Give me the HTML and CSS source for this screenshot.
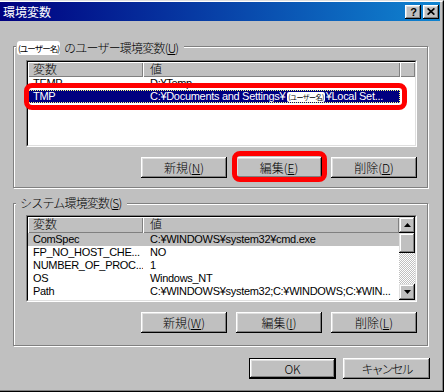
FILE: index.html
```html
<!DOCTYPE html>
<html lang="ja">
<head>
<meta charset="utf-8">
<title>環境変数</title>
<link rel="stylesheet" href="styles.css">
</head>
<body>
<div class="window">
  <div class="frame">
    <div class="titlebar">
      <span class="title">環境変数</span>
      <div class="caps">
        <span class="cap help">?</span>
        <span class="cap close"><svg width="8" height="7" viewBox="0 0 8 7"><path d="M0.6 0.4 L7.4 6.6 M7.4 0.4 L0.6 6.6" stroke="#000" stroke-width="1.7" fill="none"/></svg></span>
      </div>
    </div>
    <div class="content">
      <section class="group g1">
        <div class="legend"><span class="badge">(ユーザー名)</span><span class="ltext">のユーザー環境変数(<u>U</u>)</span></div>
        <div class="list l1">
          <div class="lv">
            <div class="lv-head"><div class="hc c1">変数</div><div class="hc c2">値</div><div class="hc fill"></div></div>
            <div class="lv-body">
              <div class="row first"><span class="cell c1">TEMP</span><span class="cell c2">D:¥Temp</span></div>
              <div class="row sel"><span class="cell c1">TMP</span><span class="cell c2">C:¥Documents and Settings¥<span class="badge-sm">(ユーザー名)</span>¥Local Set...</span></div>
            </div>
          </div>
        </div>
        <div class="btns">
          <button class="btn">新規(<u>N</u>)</button>
          <button class="btn">編集(<u>E</u>)</button>
          <button class="btn">削除(<u>D</u>)</button>
        </div>
      </section>
      <section class="group g2">
        <div class="legend"><span class="ltext">システム環境変数(<u>S</u>)</span></div>
        <div class="list l2">
          <div class="lv">
            <div class="lv-main">
              <div class="lv-head"><div class="hc c1">変数</div><div class="hc c2">値</div></div>
              <div class="lv-body">
                <div class="row hl"><span class="cell c1">ComSpec</span><span class="cell c2">C:¥WINDOWS¥system32¥cmd.exe</span></div>
                <div class="row"><span class="cell c1">FP_NO_HOST_CHE...</span><span class="cell c2">NO</span></div>
                <div class="row"><span class="cell c1">NUMBER_OF_PROC...</span><span class="cell c2">1</span></div>
                <div class="row"><span class="cell c1">OS</span><span class="cell c2">Windows_NT</span></div>
                <div class="row"><span class="cell c1">Path</span><span class="cell c2">C:¥WINDOWS¥system32;C:¥WINDOWS;C:¥WIN...</span></div>
                <div class="row"><span class="cell c1">PATHEXT</span><span class="cell c2">.COM;.EXE;.BAT;.CMD;.VBS;.VBE;.JS;.JSE;.WSF</span></div>
              </div>
            </div>
            <div class="scrollbar">
              <div class="sb-btn"><svg width="7" height="4" viewBox="0 0 7 4"><path d="M3.5 0 L7 4 L0 4 Z" fill="#000"/></svg></div>
              <div class="sb-thumb"></div>
              <div class="sb-track"></div>
              <div class="sb-btn"><svg width="7" height="4" viewBox="0 0 7 4"><path d="M0 0 L7 0 L3.5 4 Z" fill="#000"/></svg></div>
            </div>
          </div>
        </div>
        <div class="btns">
          <button class="btn">新規(<u>W</u>)</button>
          <button class="btn">編集(<u>I</u>)</button>
          <button class="btn">削除(<u>L</u>)</button>
        </div>
      </section>
      <div class="dlg-btns">
        <button class="btn wide default">OK</button>
        <button class="btn wide cancel">キャンセル</button>
      </div>
    </div>
  </div>
  <div class="mark mark-row"></div>
  <div class="mark mark-btn"></div>
</div>
</body>
</html>
```

FILE: styles.css
```css
* { box-sizing: border-box; }

body {
  margin: 0;
  background: #c0c0c0;
  font-family: "Noto Sans CJK JP", sans-serif;
  font-weight: 300;
  font-size: 12px;
  color: #000;
}

.window {
  position: relative;
  width: 444px;
  height: 392px;
  overflow: hidden;
  border-top: 1px solid #dfdfdf;
  border-right: 1px solid #000;
  border-bottom: 1px solid #000;
}

.frame {
  height: 100%;
  border-top: 1px solid #fff;
  border-right: 1px solid #808080;
  border-bottom: 1px solid #808080;
  padding-right: 2px;
  display: flex;
  flex-direction: column;
}

/* title bar */
.titlebar {
  height: 19px;
  flex-shrink: 0;
  display: flex;
  align-items: center;
  padding: 0 1px 0 3px;
  background: linear-gradient(to right, #000080, #1084d0);
}
.title {
  color: #fff;
  font-size: 12px;
  font-weight: 400;
  line-height: 19px;
}
.caps {
  margin-left: auto;
  display: flex;
  gap: 2px;
}
.cap {
  width: 16px;
  height: 14px;
  background: #c0c0c0;
  box-shadow: inset -1px -1px #000, inset 1px 1px #fff, inset -2px -2px #808080, inset 2px 2px #dfdfdf;
  display: flex;
  align-items: center;
  justify-content: center;
}
.help {
  font: bold 11px/14px "Liberation Sans", sans-serif;
  padding-left: 1px;
}

/* content */
.content {
  padding: 25px 10px 0 13px;
  display: flex;
  flex-direction: column;
}

.group {
  width: 415px;
  border: 1px solid #808080;
  box-shadow: inset 1px 1px #fff, 1px 1px #fff;
  display: flex;
  flex-direction: column;
  padding: 0 10px 0 12px;
}
.g1 { padding-bottom: 9px; }
.g2 { margin-top: 15px; padding-bottom: 12px; }

.legend {
  align-self: flex-start;
  height: 14px;
  margin-left: -10px;
  background: #c0c0c0;
  display: flex;
  align-items: center;
  padding: 0 6px 0 1px;
}
.g1 .legend { margin-top: -6px; }
.g2 .legend { margin-top: -8px; padding-left: 4px; }

.ltext {
  letter-spacing: -0.8px;
  line-height: 14px;
  white-space: nowrap;
}

.badge {
  display: inline-block;
  height: 14px;
  line-height: 14px;
  padding: 0 1px;
  margin-right: 4px;
  background: #fff;
  border-radius: 3px;
  font-size: 8.5px;
  font-weight: 400;
  letter-spacing: -1px;
  white-space: nowrap;
}

/* list views */
.list {
  width: 391px;
  height: 87px;
  flex-shrink: 0;
  margin-top: 5px;
  border: 1px solid;
  border-color: #808080 #fff #fff #808080;
}
.lv {
  height: 100%;
  border: 1px solid;
  border-color: #000 #dfdfdf #dfdfdf #000;
  background: #fff;
  display: flex;
  flex-direction: column;
  overflow: hidden;
}
.l2 .lv { flex-direction: row; }
.lv-main {
  flex: 1;
  display: flex;
  flex-direction: column;
  min-width: 0;
}

.lv-head {
  display: flex;
  height: 15px;
  flex-shrink: 0;
}
.l2 .lv-head { height: 16px; }

.hc {
  background: #c0c0c0;
  box-shadow: inset 1px 1px #fff, inset -1px -1px #808080;
  font-size: 12px;
  line-height: 14px;
  white-space: nowrap;
}
.hc.c1 { width: 115px; padding-left: 5px; }
.hc.c2 { width: 257px; padding-left: 7px; }
.l2 .hc.c2 { width: auto; flex: 1; }
.hc.fill { flex: 1; }

.lv-body {
  flex: 1;
  overflow: hidden;
}

.row {
  display: flex;
  height: 13px;
  font: 400 11px/13px "Liberation Sans", "Noto Sans CJK JP", sans-serif;
  letter-spacing: -0.3px;
  white-space: nowrap;
}
.l1 .row { width: 372px; }
.row .c1 {
  width: 115px;
  flex-shrink: 0;
  padding-left: 5px;
  overflow: hidden;
}
.row .c2 {
  flex: 1;
  padding-left: 7px;
  overflow: hidden;
  display: flex;
  align-items: center;
}
.row.sel {
  background: #000080;
  color: #fff;
  outline: 1px dotted #ffff80;
  outline-offset: -1px;
}
.row.hl { background: #c0c0c0; }

.badge-sm {
  display: inline-block;
  height: 10px;
  line-height: 10px;
  padding: 0 1px;
  margin: 0 1px 0 2px;
  background: #fff;
  color: #000;
  border-radius: 2px;
  font-family: "Noto Sans CJK JP", sans-serif;
  font-size: 7px;
  letter-spacing: -0.6px;
}

/* scrollbar */
.scrollbar {
  width: 16px;
  flex-shrink: 0;
  display: flex;
  flex-direction: column;
}
.sb-btn, .sb-thumb {
  background: #c0c0c0;
  box-shadow: inset -1px -1px #000, inset 1px 1px #dfdfdf, inset -2px -2px #808080, inset 2px 2px #fff;
}
.sb-btn {
  height: 16px;
  flex-shrink: 0;
  display: flex;
  align-items: center;
  justify-content: center;
}
.sb-thumb {
  height: 20px;
  flex-shrink: 0;
}
.sb-track {
  flex: 1;
  background-color: #fff;
  background-image: conic-gradient(#c0c0c0 0 25%, transparent 0 50%, #c0c0c0 0 75%, transparent 0);
  background-size: 2px 2px;
}

/* buttons */
.btns {
  display: flex;
  justify-content: flex-end;
  gap: 9px;
  margin-top: 10px;
}
.btn {
  width: 86px;
  height: 21px;
  border: 0;
  padding: 0;
  background: #c0c0c0;
  font: 300 12px/19px "Noto Sans CJK JP", sans-serif;
  color: #000;
  box-shadow: inset -1px -1px #000, inset 1px 1px #fff, inset -2px -2px #808080, inset 2px 2px #dfdfdf;
  white-space: nowrap;
}
.btn u { text-underline-offset: 1px; }

.dlg-btns {
  display: flex;
  justify-content: flex-end;
  gap: 7px;
  margin-top: 12px;
}
.btn.wide { width: 87px; }
.btn.default { border: 1px solid #000; line-height: 17px; }
.btn.cancel { letter-spacing: -2px; }

/* red annotation marks */
.mark {
  position: absolute;
  border: 5px solid #f00;
  border-radius: 8px;
}
.mark-row { left: 24px; top: 82px; width: 383px; height: 27px; }
.mark-btn { left: 232px; top: 150px; width: 95px; height: 31px; }
```
